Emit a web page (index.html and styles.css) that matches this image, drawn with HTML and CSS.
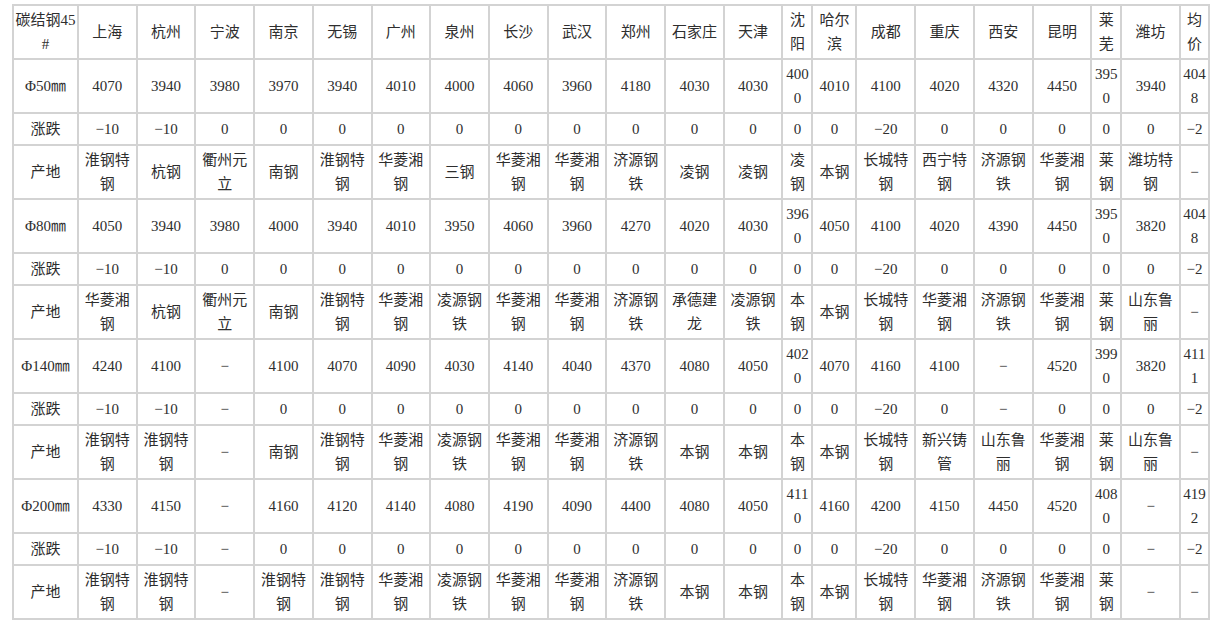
FILE: index.html
```html
<!DOCTYPE html>
<html lang="zh-CN">
<head>
<meta charset="utf-8">
<title>碳结钢45#</title>
<link rel="stylesheet" href="styles.css">
</head>
<body>
<table class="price">
<colgroup>
<col class="c-first">
<col><col><col><col><col><col><col><col><col><col><col><col>
<col class="c-narrow">
<col class="c-hb">
<col><col><col><col>
<col class="c-narrow">
<col>
<col class="c-avg">
</colgroup>
<tbody>
<tr class="tall">
<td>碳结钢45#</td><td>上海</td><td>杭州</td><td>宁波</td><td>南京</td><td>无锡</td><td>广州</td><td>泉州</td><td>长沙</td><td>武汉</td><td>郑州</td><td>石家庄</td><td>天津</td><td>沈阳</td><td>哈尔滨</td><td>成都</td><td>重庆</td><td>西安</td><td>昆明</td><td>莱芜</td><td>潍坊</td><td>均价</td>
</tr>
<tr class="tall">
<td>Φ50㎜</td><td>4070</td><td>3940</td><td>3980</td><td>3970</td><td>3940</td><td>4010</td><td>4000</td><td>4060</td><td>3960</td><td>4180</td><td>4030</td><td>4030</td><td>4000</td><td>4010</td><td>4100</td><td>4020</td><td>4320</td><td>4450</td><td>3950</td><td>3940</td><td>4048</td>
</tr>
<tr class="short">
<td>涨跌</td><td>−10</td><td>−10</td><td>0</td><td>0</td><td>0</td><td>0</td><td>0</td><td>0</td><td>0</td><td>0</td><td>0</td><td>0</td><td>0</td><td>0</td><td>−20</td><td>0</td><td>0</td><td>0</td><td>0</td><td>0</td><td>−2</td>
</tr>
<tr class="tall">
<td>产地</td><td>淮钢特钢</td><td>杭钢</td><td>衢州元立</td><td>南钢</td><td>淮钢特钢</td><td>华菱湘钢</td><td>三钢</td><td>华菱湘钢</td><td>华菱湘钢</td><td>济源钢铁</td><td>凌钢</td><td>凌钢</td><td>凌钢</td><td>本钢</td><td>长城特钢</td><td>西宁特钢</td><td>济源钢铁</td><td>华菱湘钢</td><td>莱钢</td><td>潍坊特钢</td><td>−</td>
</tr>
<tr class="tall">
<td>Φ80㎜</td><td>4050</td><td>3940</td><td>3980</td><td>4000</td><td>3940</td><td>4010</td><td>3950</td><td>4060</td><td>3960</td><td>4270</td><td>4020</td><td>4030</td><td>3960</td><td>4050</td><td>4100</td><td>4020</td><td>4390</td><td>4450</td><td>3950</td><td>3820</td><td>4048</td>
</tr>
<tr class="short">
<td>涨跌</td><td>−10</td><td>−10</td><td>0</td><td>0</td><td>0</td><td>0</td><td>0</td><td>0</td><td>0</td><td>0</td><td>0</td><td>0</td><td>0</td><td>0</td><td>−20</td><td>0</td><td>0</td><td>0</td><td>0</td><td>0</td><td>−2</td>
</tr>
<tr class="tall">
<td>产地</td><td>华菱湘钢</td><td>杭钢</td><td>衢州元立</td><td>南钢</td><td>淮钢特钢</td><td>华菱湘钢</td><td>凌源钢铁</td><td>华菱湘钢</td><td>华菱湘钢</td><td>济源钢铁</td><td>承德建龙</td><td>凌源钢铁</td><td>本钢</td><td>本钢</td><td>长城特钢</td><td>华菱湘钢</td><td>济源钢铁</td><td>华菱湘钢</td><td>莱钢</td><td>山东鲁丽</td><td>−</td>
</tr>
<tr class="tall">
<td>Φ140㎜</td><td>4240</td><td>4100</td><td>−</td><td>4100</td><td>4070</td><td>4090</td><td>4030</td><td>4140</td><td>4040</td><td>4370</td><td>4080</td><td>4050</td><td>4020</td><td>4070</td><td>4160</td><td>4100</td><td>−</td><td>4520</td><td>3990</td><td>3820</td><td>4111</td>
</tr>
<tr class="short">
<td>涨跌</td><td>−10</td><td>−10</td><td>−</td><td>0</td><td>0</td><td>0</td><td>0</td><td>0</td><td>0</td><td>0</td><td>0</td><td>0</td><td>0</td><td>0</td><td>−20</td><td>0</td><td>−</td><td>0</td><td>0</td><td>0</td><td>−2</td>
</tr>
<tr class="tall">
<td>产地</td><td>淮钢特钢</td><td>淮钢特钢</td><td>−</td><td>南钢</td><td>淮钢特钢</td><td>华菱湘钢</td><td>凌源钢铁</td><td>华菱湘钢</td><td>华菱湘钢</td><td>济源钢铁</td><td>本钢</td><td>本钢</td><td>本钢</td><td>本钢</td><td>长城特钢</td><td>新兴铸管</td><td>山东鲁丽</td><td>华菱湘钢</td><td>莱钢</td><td>山东鲁丽</td><td>−</td>
</tr>
<tr class="tall">
<td>Φ200㎜</td><td>4330</td><td>4150</td><td>−</td><td>4160</td><td>4120</td><td>4140</td><td>4080</td><td>4190</td><td>4090</td><td>4400</td><td>4080</td><td>4050</td><td>4110</td><td>4160</td><td>4200</td><td>4150</td><td>4450</td><td>4520</td><td>4080</td><td>−</td><td>4192</td>
</tr>
<tr class="short">
<td>涨跌</td><td>−10</td><td>−10</td><td>−</td><td>0</td><td>0</td><td>0</td><td>0</td><td>0</td><td>0</td><td>0</td><td>0</td><td>0</td><td>0</td><td>0</td><td>−20</td><td>0</td><td>0</td><td>0</td><td>0</td><td>−</td><td>−2</td>
</tr>
<tr class="tall">
<td>产地</td><td>淮钢特钢</td><td>淮钢特钢</td><td>−</td><td>淮钢特钢</td><td>淮钢特钢</td><td>华菱湘钢</td><td>凌源钢铁</td><td>华菱湘钢</td><td>华菱湘钢</td><td>济源钢铁</td><td>本钢</td><td>本钢</td><td>本钢</td><td>本钢</td><td>长城特钢</td><td>华菱湘钢</td><td>济源钢铁</td><td>华菱湘钢</td><td>莱钢</td><td>−</td><td>−</td>
</tr>
</tbody>
</table>
</body>
</html>
```

FILE: styles.css
```css
html, body {
  background: #ffffff;
}

body {
  margin: 4px 0 0 12px;
  font-family: "Liberation Serif", "Noto Sans CJK SC", serif;
  font-size: 15px;
  color: #2e2e2e;
}

.price {
  border-collapse: collapse;
  table-layout: fixed;
  width: 1198px;
}

.price td {
  border: 2px solid #d3d3d3;
  text-align: center;
  vertical-align: middle;
  line-height: 24px;
  padding: 2px 2px;
  word-break: break-all;
  overflow-wrap: anywhere;
}

.price td:first-child {
  padding-left: 1px;
  padding-right: 1px;
}

.price .short td {
  padding-top: 3px;
  padding-bottom: 3px;
}

.c-first {
  width: 65px;
}

.c-narrow {
  width: 30px;
}

.c-hb {
  width: 44px;
}

.c-avg {
  width: 29px;
}
```
